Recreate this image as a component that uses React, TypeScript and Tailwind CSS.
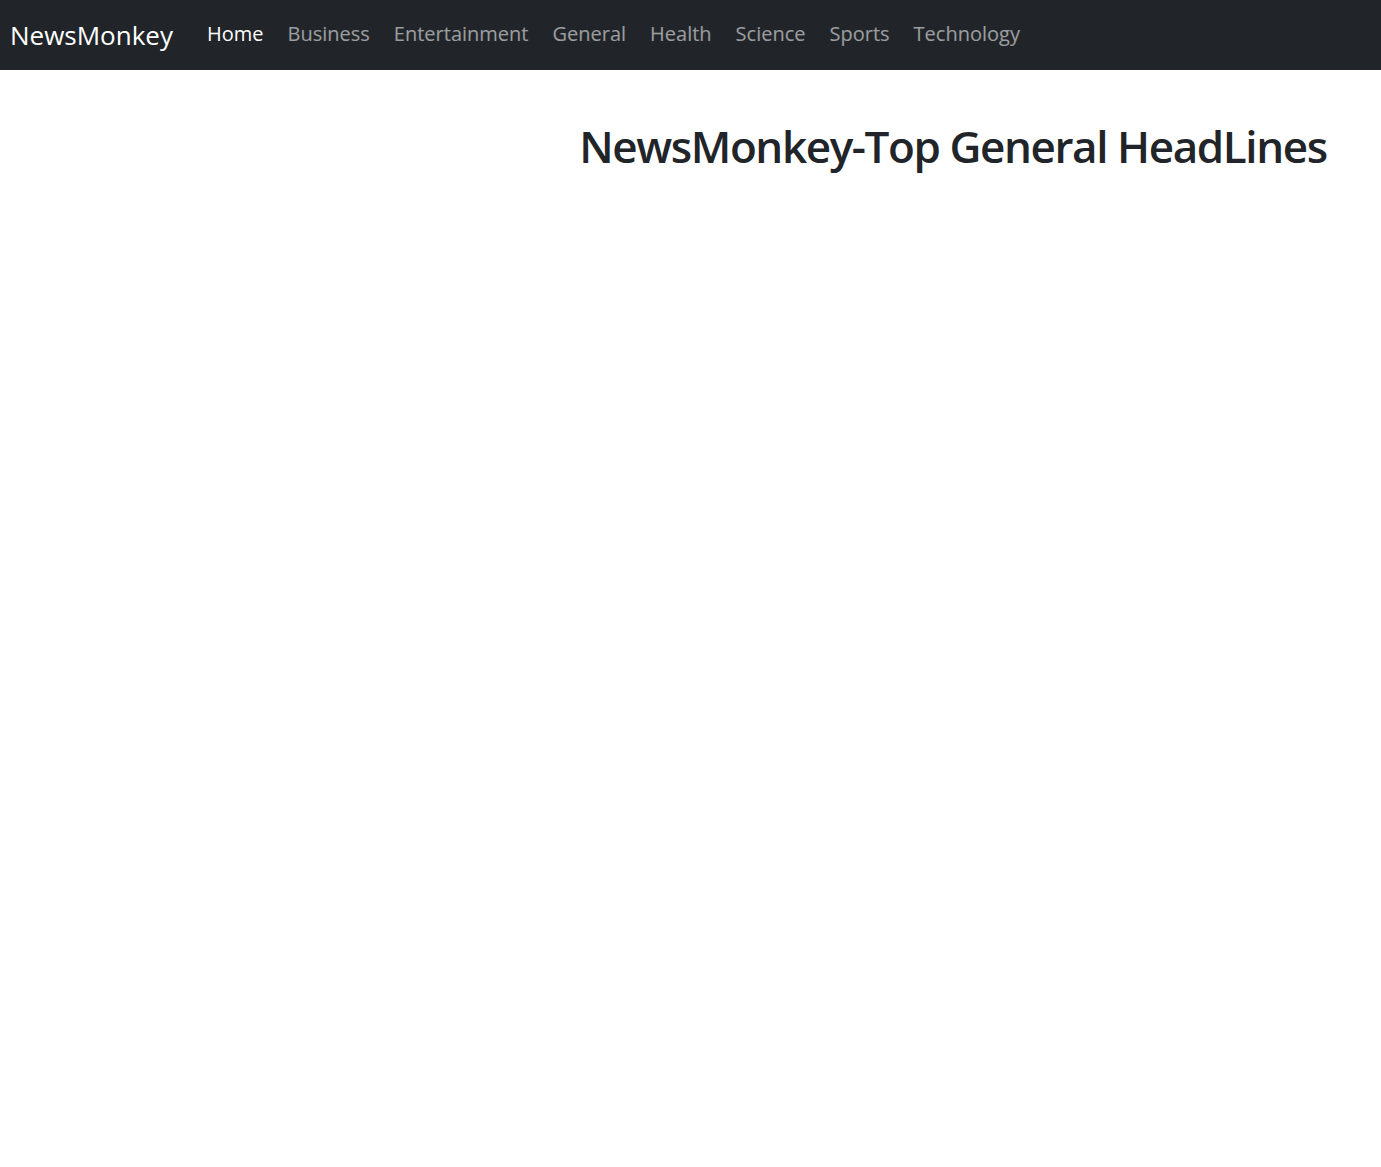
const links = ['Home', 'Business', 'Entertainment', 'General', 'Health', 'Science', 'Sports', 'Technology'];

export default function App() {
  return (
    <div className="min-h-screen bg-white font-['Open_Sans',sans-serif]">
      <nav className="flex h-[70px] items-center bg-[#212529] px-[10px]">
        <a href="#" className="mr-[34px] text-[26px] leading-none text-white">
          NewsMonkey
        </a>
        <ul className="flex items-center gap-[24px]">
          {links.map((l, i) => (
            <li key={l}>
              <a
                href="#"
                className={
                  'text-[20px] leading-none ' + (i === 0 ? 'text-white' : 'text-white/55')
                }
              >
                {l}
              </a>
            </li>
          ))}
        </ul>
      </nav>
      <div className="ml-[525px] pt-[50px] text-center">
        <h1 className="whitespace-nowrap text-[44px] font-semibold leading-[1.2] tracking-[-1.4px] text-[#212529]">
          NewsMonkey-Top General HeadLines
        </h1>
      </div>
    </div>
  );
}
